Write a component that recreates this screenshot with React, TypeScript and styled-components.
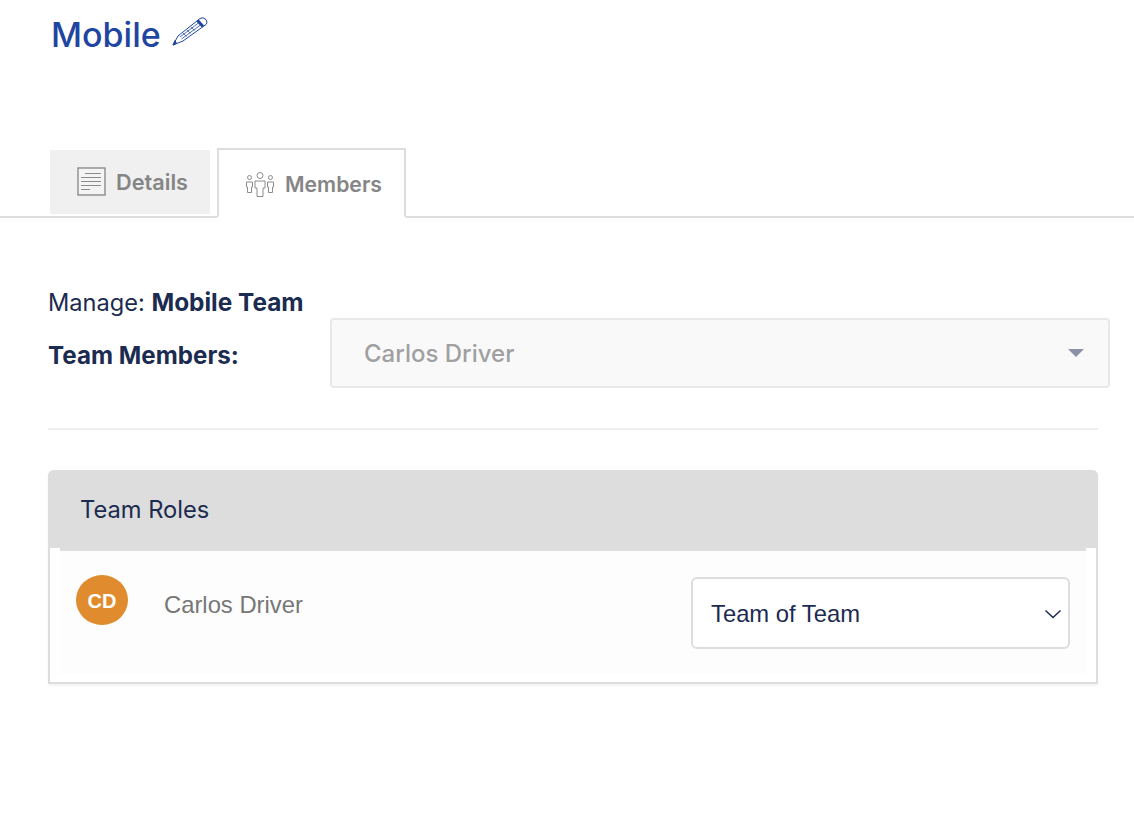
import styled, { createGlobalStyle } from "styled-components";

const GlobalStyle = createGlobalStyle`
  html, body {
    margin: 0;
    padding: 0;
    background: #fff;
    font-family: Inter, "Liberation Sans", sans-serif;
    color: #1c2b50;
  }
`;

const Page = styled.div`
  width: 1134px;
  height: 838px;
  overflow: hidden;
  display: flex;
  flex-direction: column;
`;

const TitleRow = styled.div`
  height: 148px;
  box-sizing: border-box;
  padding: 13px 0 0 51px;
  display: flex;
  align-items: flex-start;
  gap: 10px;
`;

const Title = styled.h1`
  margin: 0;
  font-size: 34px;
  line-height: 44px;
  font-weight: 500;
  color: #1f45a0;
`;

const PencilWrap = styled.span`
  display: block;
  margin-top: 2px;
`;

const TabBar = styled.div`
  height: 70px;
  box-sizing: border-box;
  border-bottom: 2px solid #dddddd;
  display: flex;
  align-items: flex-start;
  padding-left: 50px;
`;

const InactiveTab = styled.div`
  width: 160px;
  height: 64px;
  margin-top: 2px;
  margin-right: 7px;
  background: #f0f0f0;
  display: flex;
  align-items: center;
  box-sizing: border-box;
  padding-left: 27px;
  gap: 9px;
  font-size: 21.7px;
  font-weight: 600;
  color: #858585;
`;

const ActiveTab = styled.div`
  width: 189px;
  height: 70px;
  box-sizing: border-box;
  border: 2px solid #dddddd;
  border-bottom: 2px solid #fff;
  background: #fff;
  display: flex;
  align-items: center;
  padding: 1px 0 0 26px;
  gap: 10px;
  font-size: 21.2px;
  font-weight: 600;
  color: #858585;

  svg {
    margin-top: 2px;
  }
`;

const Content = styled.div`
  padding: 69px 0 0 48px;
  display: flex;
  flex-direction: column;
`;

const ManageLine = styled.div`
  font-size: 23.6px;
  line-height: 30px;
  height: 31px;
`;

const Bold = styled.strong`
  font-size: 24.4px;
  font-weight: 700;
`;

const MembersRow = styled.div`
  display: flex;
  align-items: flex-start;
`;

const MembersLabel = styled.div`
  width: 282px;
  flex: none;
  font-size: 24.2px;
  font-weight: 700;
  line-height: 30px;
  padding-top: 23px;
`;

const MemberPicker = styled.div`
  width: 780px;
  height: 70px;
  box-sizing: border-box;
  background: #f9f9f9;
  border: 2px solid #e8e8e8;
  border-radius: 4px;
  display: flex;
  align-items: center;
  justify-content: space-between;
  padding: 0 24px 0 32px;
  font-size: 24px;
  font-weight: 500;
  color: #a0a0a0;
`;

const Caret = styled.span`
  width: 0;
  height: 0;
  border-left: 8px solid transparent;
  border-right: 8px solid transparent;
  border-top: 8px solid #8a90a6;
`;

const Divider = styled.hr`
  width: 1050px;
  margin: 40px 0 40px;
  border: 0;
  border-top: 2px solid #eeeeee;
`;

const Panel = styled.section`
  width: 1050px;
  height: 214px;
  box-sizing: border-box;
  border: 2px solid #dddddd;
  border-top: 0;
  border-radius: 6px 6px 0 0;
  box-shadow: 0 2px 3px rgba(0, 0, 0, 0.05);
  display: flex;
  flex-direction: column;
`;

const PanelHeader = styled.div`
  height: 78px;
  margin: 0 -2px;
  flex: none;
  box-sizing: border-box;
  background: #dddddd;
  border-radius: 6px 6px 0 0;
  padding: 1px 0 0 32px;
  display: flex;
  align-items: center;
  font-size: 23.7px;
`;

const RoleRow = styled.div`
  margin: 0 10px 8px;
  flex: 1;
  background: #fdfdfd;
  border-top: 3px solid #dddddd;
  display: flex;
  align-items: flex-start;
  padding: 24px 16px 0 16px;
  box-sizing: border-box;
`;

const Avatar = styled.div`
  width: 52px;
  height: 50px;
  flex: none;
  box-sizing: border-box;
  padding-top: 2px;
  border-radius: 50%;
  background: #e08b2d;
  color: #fff;
  font-family: "Liberation Sans", Arial, sans-serif;
  font-size: 20px;
  font-weight: 700;
  display: flex;
  align-items: center;
  justify-content: center;
`;

const MemberName = styled.div`
  margin: 15px 0 0 36px;
  flex: 1;
  font-family: "Liberation Sans", Arial, sans-serif;
  font-size: 23.8px;
  line-height: 30px;
  color: #777777;
`;

const RoleSelect = styled.div`
  width: 379px;
  height: 72px;
  margin-top: 2px;
  box-sizing: border-box;
  background: #fff;
  border: 2px solid #dddddd;
  border-radius: 6px;
  display: flex;
  align-items: center;
  justify-content: space-between;
  padding: 2px 6px 0 18px;
  font-family: "Liberation Sans", Arial, sans-serif;
  font-size: 23.8px;
`;

const PencilIcon = () => (
  <svg width="38" height="32" viewBox="0 0 38 32" fill="none" stroke="#1f45a0" strokeWidth="1">
    <path d="M2 30 L7 21 L29 3.5 Q32 1.5 35 4.5 Q37 7.5 35 9.5 L12 26 Z" fill="#fff" />
    <path d="M2 30 L5.5 28.5 L4 25.5 Z" fill="#1f45a0" />
    <path d="M26.5 5.5 L32 11.5" strokeWidth="3" />
    <path d="M9 22 L27.5 8 M10.5 24 L29.5 10" strokeWidth="0.8" />
    <path d="M12 18 L15.5 21.5 M16 15 L19.5 18.5 M20 12 L23.5 15.5" strokeWidth="0.7" />
  </svg>
);

const DetailsIcon = () => (
  <svg width="30" height="30" viewBox="0 0 30 30" fill="none" stroke="#8c8c8c">
    <rect x="1" y="1" width="27" height="27" strokeWidth="1.4" fill="#f4f4f4" />
    <path d="M8 6.5 H24 M4 10.5 H24 M4 14.5 H24 M4 18.5 H24 M4 22.5 H13" strokeWidth="1.2" />
  </svg>
);

const MembersIcon = () => (
  <svg width="30" height="26" viewBox="0 0 30 26" fill="none" stroke="#8c8c8c" strokeWidth="1">
    <circle cx="15" cy="3.5" r="3" />
    <path d="M10 9 H20 V16 H18 V24.5 H12 V16 H10 Z" />
    <circle cx="4.5" cy="5.5" r="2" />
    <path d="M1.5 10 H7.5 V15 H6.5 V20.5 H2.5 V15 H1.5 Z" />
    <circle cx="25.5" cy="5.5" r="2" />
    <path d="M22.5 10 H28.5 V15 H27.5 V20.5 H23.5 V15 H22.5 Z" />
  </svg>
);

const ChevronIcon = () => (
  <svg width="18" height="10" viewBox="0 0 18 10" fill="none" stroke="#1c2b50" strokeWidth="1.5">
    <path d="M1.5 1.5 L9 8.5 L16.5 1.5" />
  </svg>
);

export default function App() {
  return (
    <Page>
      <GlobalStyle />
      <TitleRow>
        <Title>Mobile</Title>
        <PencilWrap>
          <PencilIcon />
        </PencilWrap>
      </TitleRow>
      <TabBar>
        <InactiveTab>
          <DetailsIcon />
          Details
        </InactiveTab>
        <ActiveTab>
          <MembersIcon />
          Members
        </ActiveTab>
      </TabBar>
      <Content>
        <ManageLine>
          Manage: <Bold>Mobile Team</Bold>
        </ManageLine>
        <MembersRow>
          <MembersLabel>Team Members:</MembersLabel>
          <MemberPicker>
            Carlos Driver
            <Caret />
          </MemberPicker>
        </MembersRow>
        <Divider />
        <Panel>
          <PanelHeader>Team Roles</PanelHeader>
          <RoleRow>
            <Avatar>CD</Avatar>
            <MemberName>Carlos Driver</MemberName>
            <RoleSelect>
              Team of Team
              <ChevronIcon />
            </RoleSelect>
          </RoleRow>
        </Panel>
      </Content>
    </Page>
  );
}
